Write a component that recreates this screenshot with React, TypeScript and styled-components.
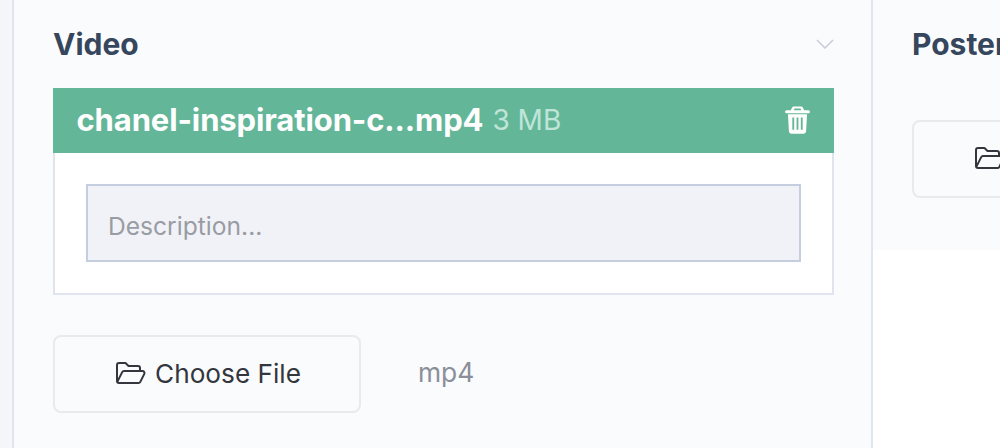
import React from "react";
import styled, { createGlobalStyle } from "styled-components";

const Global = createGlobalStyle`
  html, body { margin: 0; padding: 0; background: #fff; }
  body { font-family: Inter, "Liberation Sans", sans-serif; }
  #root { width: 1000px; height: 448px; overflow: hidden; }
`;

const Page = styled.div`
  display: flex;
  width: 1000px;
  height: 448px;
  overflow: hidden;
  background: #f5f6f9;
  padding-left: 12px;
  box-sizing: border-box;
`;

const VideoPanel = styled.section`
  flex: 0 0 861px;
  box-sizing: border-box;
  border-left: 2px solid #dfe4ee;
  border-right: 2px solid #dfe4ee;
  background: #fafbfd;
  padding: 0 37px 0 39px;
`;

const SidePanel = styled.div`
  flex: 1;
  min-width: 0;
  background: #fff;
`;

const PosterPanel = styled.section`
  height: 250px;
  box-sizing: border-box;
  background: #fafbfd;
  padding-left: 39px;
`;

const Header = styled.header`
  display: flex;
  align-items: center;
  justify-content: space-between;
  height: 88px;
`;

const Title = styled.h2`
  margin: 0;
  font-size: 30px;
  font-weight: 700;
  color: #36465c;
  letter-spacing: 0;
  white-space: nowrap;
`;

const Chevron = styled.svg`
  width: 18px;
  height: 10px;
  fill: none;
  stroke: #c9ced8;
  stroke-width: 1.6;
`;

const FileCard = styled.div`
  background: #fff;
  box-shadow: inset 0 0 0 2px #dfe4ee;
  height: 207px;
`;

const FileBar = styled.div`
  display: flex;
  align-items: center;
  height: 65px;
  padding: 0 24px 2px 23.5px;
  box-sizing: border-box;
  background: #64b699;
  color: #fff;
`;

const FileName = styled.span`
  font-size: 31px;
  font-weight: 700;
  letter-spacing: -0.12px;
  white-space: nowrap;
`;

const FileSize = styled.span`
  margin-left: 9px;
  font-size: 28px;
  font-weight: 400;
  color: #bfe5d8;
  white-space: nowrap;
`;

const TrashIcon = styled.svg`
  margin-left: auto;
  width: 25px;
  height: 28px;
  fill: #fff;
`;

const CardBody = styled.div`
  padding: 31px 33px;
`;

const Description = styled.input`
  display: block;
  width: 100%;
  height: 78px;
  box-sizing: border-box;
  padding: 5px 20px 0;
  border: 2px solid #c5cedf;
  border-radius: 0;
  background: #f1f2f7;
  font: 400 24.6px Inter, "Liberation Sans", sans-serif;
  outline: none;
  &::placeholder { color: #999ca3; opacity: 1; }
`;

const UploadRow = styled.div`
  display: flex;
  align-items: center;
  margin-top: 40px;
`;

const PosterUpload = styled(UploadRow)`
  margin-top: 32px;
`;

const ChooseButton = styled.button`
  display: flex;
  align-items: center;
  justify-content: center;
  gap: 9px;
  flex: 0 0 auto;
  width: 308px;
  height: 78px;
  box-sizing: border-box;
  border: 2px solid #e8eaee;
  border-radius: 8px;
  background: #fafbfd;
  color: #33363d;
  font: 400 26.2px Inter, "Liberation Sans", sans-serif;
  white-space: nowrap;
  padding: 0 0 2px 3px;
`;

const FolderIcon = styled.svg`
  width: 30px;
  height: 24px;
  fill: none;
  stroke: #33363d;
  stroke-width: 2;
  stroke-linejoin: round;
`;

const Extension = styled.span`
  margin-left: 57px;
  margin-bottom: 4px;
  font-size: 26.4px;
  color: #8a8f9a;
`;

const Folder = () => (
  <FolderIcon viewBox="0 0 30 24">
    <path d="M3 22a2 2 0 0 1-2-2V4a2 2 0 0 1 2-2h6.5l3 3H22a2 2 0 0 1 2 2v3" />
    <path d="M3 22h19.5a2 2 0 0 0 1.8-1.1l4-8A2 2 0 0 0 26.5 10H8a2 2 0 0 0-1.8 1.1L1.3 20.9" />
  </FolderIcon>
);

const Trash = () => (
  <TrashIcon viewBox="0 0 24 27">
    <path d="M8.5 0.5h7a2 2 0 0 1 1.8 1.1L18.4 4h4.1a1.5 1.5 0 0 1 0 3h-21a1.5 1.5 0 0 1 0-3h4.1l1.1-2.4A2 2 0 0 1 8.5.5Zm.6 2L8.4 4h7.2l-.7-1.5Z" fillRule="evenodd" />
    <path d="M2.8 8h18.4l-.9 16.2a2.7 2.7 0 0 1-2.7 2.5H6.4a2.7 2.7 0 0 1-2.7-2.5ZM7 11v12h1.8V11Zm4.1 0v12h1.8V11Zm4.1 0v12H17V11Z" fillRule="evenodd" />
  </TrashIcon>
);

export default function App() {
  return (
    <>
      <Global />
      <Page>
        <VideoPanel>
          <Header>
            <Title>Video</Title>
            <Chevron viewBox="0 0 18 10"><path d="M1 1l8 8 8-8" /></Chevron>
          </Header>
          <FileCard>
            <FileBar>
              <FileName>chanel-inspiration-c...mp4</FileName>
              <FileSize>3 MB</FileSize>
              <Trash />
            </FileBar>
            <CardBody>
              <Description placeholder="Description..." />
            </CardBody>
          </FileCard>
          <UploadRow>
            <ChooseButton><Folder />Choose File</ChooseButton>
            <Extension>mp4</Extension>
          </UploadRow>
        </VideoPanel>
        <SidePanel>
          <PosterPanel>
            <Header><Title>Poster</Title></Header>
            <PosterUpload>
              <ChooseButton><Folder />Choose File</ChooseButton>
            </PosterUpload>
          </PosterPanel>
        </SidePanel>
      </Page>
    </>
  );
}
